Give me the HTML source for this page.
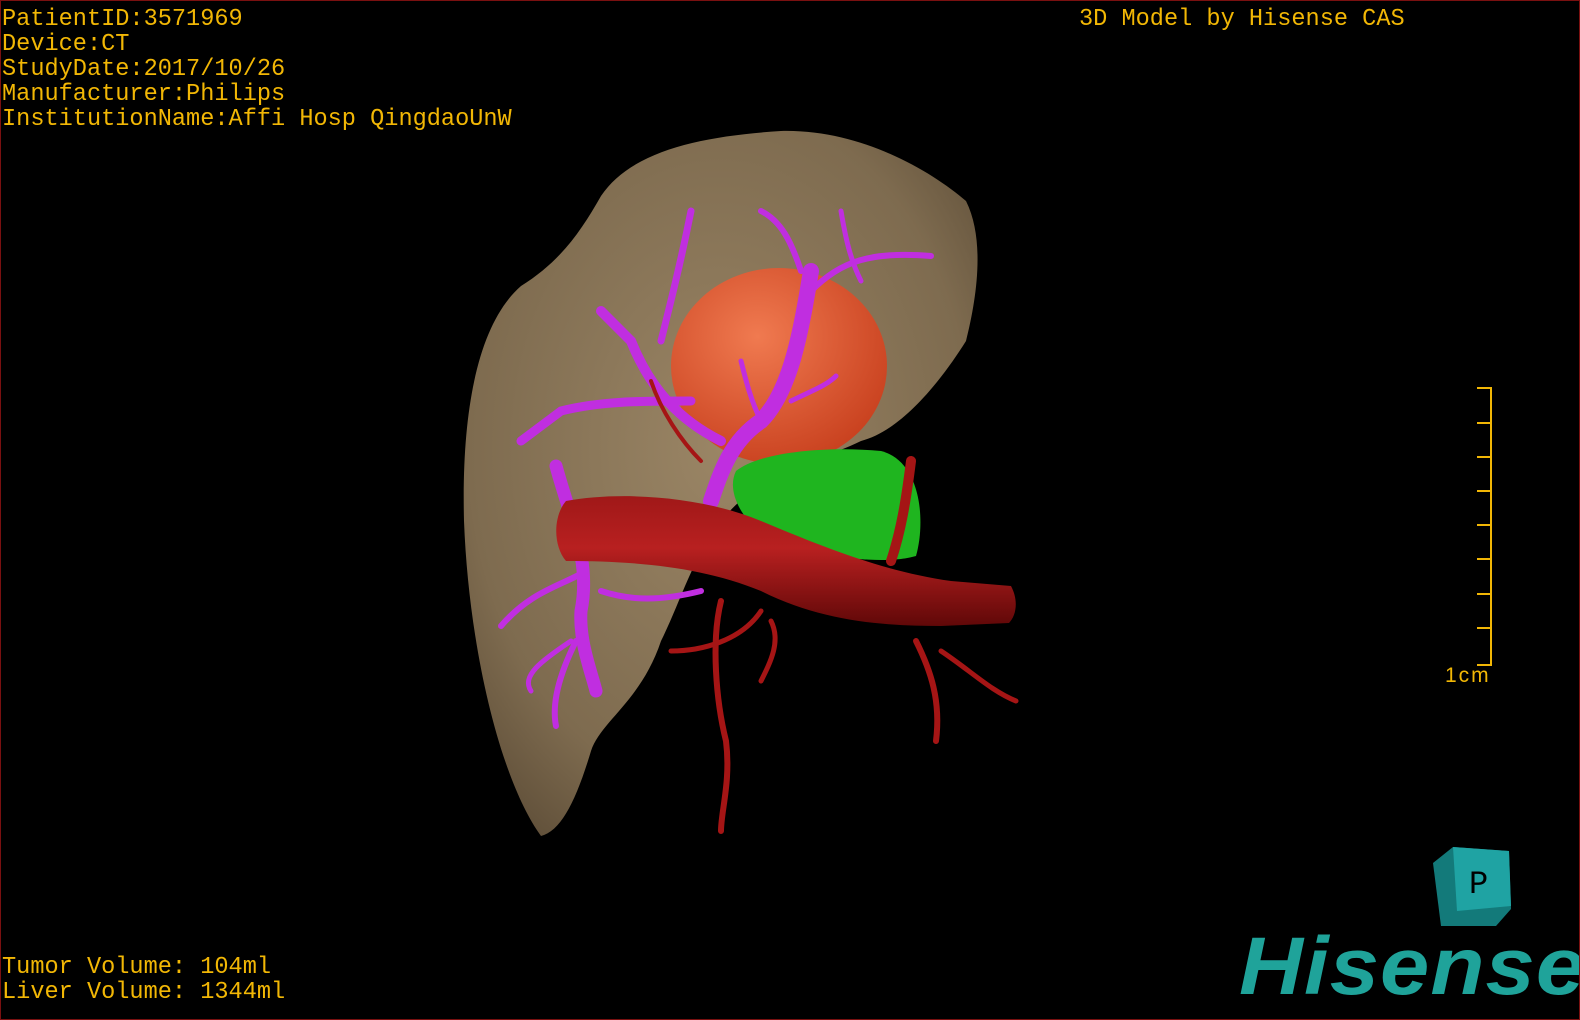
<!DOCTYPE html>
<html><head><meta charset="utf-8"><style>
html,body{margin:0;padding:0;background:#000;}
#c{position:relative;width:1580px;height:1020px;background:#000;overflow:hidden;box-sizing:border-box;border:1px solid #7a1010;}
.t{position:absolute;color:#f2b705;font-family:"Liberation Mono",monospace;font-size:23.6px;line-height:25px;white-space:pre;}
</style></head><body><div id="c">
<svg width="1580" height="1020" style="position:absolute;left:0;top:0">
<defs>
<radialGradient id="lv" cx="0.5" cy="0.45" r="0.7"><stop offset="0" stop-color="#9a8565"/><stop offset="0.7" stop-color="#7e6b4f"/><stop offset="1" stop-color="#5a4a35"/></radialGradient>
<radialGradient id="tm" cx="0.4" cy="0.35" r="0.7"><stop offset="0" stop-color="#f07a50"/><stop offset="1" stop-color="#c8401e"/></radialGradient>
<linearGradient id="vc" x1="0" y1="0" x2="0" y2="1"><stop offset="0" stop-color="#a01818"/><stop offset="0.4" stop-color="#b82020"/><stop offset="1" stop-color="#600808"/></linearGradient>
</defs>
<path d="M540 835 C500 780 468 650 463 520 C460 400 480 320 520 285 C560 260 580 230 600 195 C630 150 700 135 780 130 C860 128 930 170 965 200 C985 240 975 300 965 340 C940 380 900 430 860 440 C820 460 760 470 720 520 C690 560 680 600 660 640 C640 700 600 720 590 750 C575 800 560 830 540 835 Z" fill="url(#lv)"/>
<ellipse cx="778" cy="365" rx="108" ry="98" fill="url(#tm)"/>
<path d="M735 470 C760 450 830 445 880 450 C920 460 925 520 915 555 C880 565 820 555 770 540 C740 520 725 490 735 470 Z" fill="#1fb51f"/>
<g stroke="#c02ee0" fill="none" stroke-linecap="round">
<path d="M710 500 C720 470 730 440 760 420 C790 390 800 330 810 270" stroke-width="16"/>
<path d="M720 440 C680 420 650 390 630 340 L600 310" stroke-width="10"/>
<path d="M690 400 C640 400 600 400 560 410 L520 440" stroke-width="9"/>
<path d="M660 340 C670 300 680 260 690 210" stroke-width="7"/>
<path d="M800 270 C790 240 780 220 760 210" stroke-width="6"/>
<path d="M810 290 C840 260 870 250 930 255" stroke-width="6"/>
<path d="M840 210 C845 240 850 260 860 280" stroke-width="5"/>
<path d="M555 465 C570 520 590 560 580 610 C578 640 590 670 595 690" stroke-width="13"/>
<path d="M585 570 C560 585 530 590 500 625" stroke-width="6"/>
<path d="M600 590 C630 600 660 600 700 590" stroke-width="6"/>
<path d="M575 640 C560 670 550 700 555 725" stroke-width="6"/>
<path d="M570 640 C540 660 520 675 530 690" stroke-width="5"/>
<path d="M760 420 C750 400 745 380 740 360" stroke-width="5"/>
<path d="M790 400 C810 390 825 385 835 375" stroke-width="5"/>
</g>
<g stroke="#a51515" fill="none" stroke-linecap="round">
<path d="M720 600 C710 640 715 700 725 740 C730 780 720 810 720 830" stroke-width="6"/>
<path d="M760 610 C740 640 700 650 670 650" stroke-width="5"/>
<path d="M910 460 C905 500 900 530 890 560" stroke-width="10"/>
<path d="M915 640 C930 670 940 700 935 740" stroke-width="6"/>
<path d="M940 650 C970 670 990 690 1015 700" stroke-width="5"/>
<path d="M770 620 C780 640 770 660 760 680" stroke-width="5"/>
<path d="M650 380 C660 410 680 440 700 460" stroke-width="4"/>
</g>
<path d="M565 500 C620 490 700 495 760 520 C820 545 880 570 950 580 L1010 585 C1018 600 1015 615 1008 622 L940 625 C880 625 820 620 760 590 C700 565 630 560 565 560 C552 545 552 515 565 500 Z" fill="url(#vc)"/>
<g stroke="#f2b705" stroke-width="2" fill="none">
<path d="M1490 386 V665"/>
<path d="M1476 387H1490M1476 422H1490M1476 456H1490M1476 490H1490M1476 524H1490M1476 558H1490M1476 593H1490M1476 627H1490M1476 664H1490"/>
</g>
<polygon points="1432,862 1452,846 1508,850 1510,908 1495,925 1440,925" fill="#137a7a"/>
<polygon points="1452,846 1508,850 1510,905 1456,910" fill="#1fa3a3"/>
<text x="1468" y="892" font-family="Liberation Mono" font-size="32" fill="#000">P</text>
</svg>
<div class="t" style="left:1px;top:6px">PatientID:3571969
Device:CT
StudyDate:2017/10/26
Manufacturer:Philips
InstitutionName:Affi Hosp QingdaoUnW</div>
<div class="t" style="left:1078px;top:6px">3D Model by Hisense CAS</div>
<div class="t" style="left:1444px;top:662px;font-family:'Liberation Sans',sans-serif;font-size:21px;letter-spacing:2px">1cm</div>
<div class="t" style="left:1px;top:954px">Tumor Volume: 104ml
Liver Volume: 1344ml</div>
<div style="position:absolute;left:1238px;top:924px;color:#1fa39a;font-family:'Liberation Sans',sans-serif;font-weight:bold;font-style:italic;font-size:82px;line-height:84px;letter-spacing:1px;transform:scaleX(1.08);transform-origin:left">Hisense</div>
</div></body></html>
